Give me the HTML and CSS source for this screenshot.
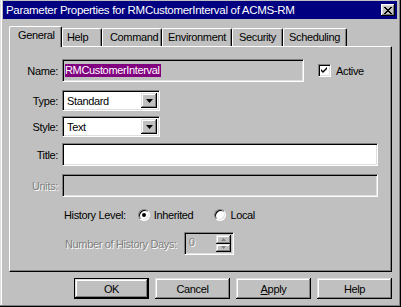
FILE: index.html
```html
<!DOCTYPE html>
<html>
<head>
<meta charset="utf-8">
<link rel="stylesheet" href="styles.css">
</head>
<body>
<div class="window">
  <div class="titlebar">
    <span class="title">Parameter Properties for RMCustomerInterval of ACMS-RM</span>
    <span class="close"><svg width="8" height="7" viewBox="0 0 8 7"><path d="M0 0h2v1h1v1h2v-1h1v-1h2v1h-1v1h-1v1h-1v1h1v1h1v1h1v1h-2v-1h-1v-1h-2v1h-1v1h-2v-1h1v-1h1v-1h1v-1h-1v-1h-1v-1h-1z" fill="#000"/></svg></span>
  </div>
  <div class="main">
    <div class="tabs">
      <div class="tab selected t-general">General</div>
      <div class="tab t-help">Help</div>
      <div class="tab t-command">Command</div>
      <div class="tab t-env">Environment</div>
      <div class="tab t-sec">Security</div>
      <div class="tab t-sched">Scheduling</div>
    </div>
    <div class="panel">
      <div class="row r-name">
        <span class="lbl">Name:</span>
        <div class="sunken field name-field disabled-bg"><span class="seltext">RMCustomerInterval</span></div>
        <div class="check">
          <span class="sunken box"><svg width="7" height="7" viewBox="0 0 7 7"><path d="M6 0v2l-1 1-1 1-1 1-1 1-1-1-1-1v-2l1 1 1 1 1-1 1-1 1-1z" fill="#000"/></svg></span>
          <span>Active</span>
        </div>
      </div>
      <div class="row r-type">
        <span class="lbl">Type:</span>
        <div class="sunken select"><span class="seltxt">Standard</span><span class="raised drop"><svg width="7" height="4" viewBox="0 0 7 4"><path d="M0 0h7l-3.5 4z" fill="#000"/></svg></span></div>
      </div>
      <div class="row r-style">
        <span class="lbl">Style:</span>
        <div class="sunken select"><span class="seltxt">Text</span><span class="raised drop"><svg width="7" height="4" viewBox="0 0 7 4"><path d="M0 0h7l-3.5 4z" fill="#000"/></svg></span></div>
      </div>
      <div class="row r-title">
        <span class="lbl">Title:</span>
        <div class="sunken field wide"></div>
      </div>
      <div class="row r-units">
        <span class="lbl dis">Units:</span>
        <div class="sunken field wide disabled-bg"></div>
      </div>
      <div class="row r-hist">
        <span class="hist-lbl">History Level:</span>
        <span class="radio-item r-inh"><span class="radio"><span class="dot"></span></span><span>Inherited</span></span>
        <span class="radio-item"><span class="radio"></span><span>Local</span></span>
      </div>
      <div class="row r-days">
        <span class="days-lbl dis">Number of History Days:</span>
        <div class="sunken spin disabled-bg">
          <span class="spin-val dis">0</span>
          <span class="spin-btns">
            <span class="raised sbtn"><svg width="5" height="3" viewBox="0 0 5 3"><path d="M0 3h5l-2.5-3z" fill="#808080"/></svg></span>
            <span class="raised sbtn"><svg width="5" height="3" viewBox="0 0 5 3"><path d="M0 0h5l-2.5 3z" fill="#808080"/></svg></span>
          </span>
        </div>
      </div>
    </div>
    <div class="buttons">
      <div class="btn default"><span class="raised inner">OK</span></div>
      <div class="btn raised">Cancel</div>
      <div class="btn raised"><span><u>A</u>pply</span></div>
      <div class="btn raised">Help</div>
    </div>
  </div>
</div>
</body>
</html>
```

FILE: styles.css
```css
* { box-sizing: border-box; }
html, body { margin: 0; padding: 0; }
body {
  width: 401px;
  height: 307px;
  background: #c0c0c0;
  font-family: "Liberation Sans", Arial, sans-serif;
  font-size: 11px;
  letter-spacing: -0.35px;
  color: #000;
  overflow: hidden;
}
.window {
  width: 401px;
  height: 307px;
  padding: 1px 4px 0 3px;
  background: #c0c0c0;
  box-shadow: inset -1px -1px #000, inset -2px -2px #808080, inset 1px 0 #dfdfdf, inset 2px 0 #fff;
}
.titlebar {
  height: 18px;
  background: #000080;
  color: #fff;
  display: flex;
  align-items: center;
  justify-content: space-between;
  padding: 0 2px 0 3px;
}
.title { font-size: 11.5px; letter-spacing: -0.3px; }
.close {
  width: 14px;
  height: 12px;
  background: #c0c0c0;
  display: flex;
  align-items: center;
  justify-content: center;
  box-shadow: inset -1px -1px #000, inset 1px 1px #fff, inset -2px -2px #808080, inset 2px 2px #dfdfdf;
}
.main {
  padding: 7px 5px 0 6px;
}
.tabs {
  display: flex;
  align-items: flex-end;
  height: 20px;
}
.tab {
  height: 18px;
  background: #c0c0c0;
  border-top: 1px solid #fff;
  border-left: 1px solid #fff;
  border-right: 1px solid #000;
  border-radius: 2px 2px 0 0;
  box-shadow: inset -1px 0 #808080;
  padding-top: 2px;
  white-space: nowrap;
}
.tab.selected {
  height: 21px;
  margin-bottom: -1px;
  position: relative;
  z-index: 1;
  padding-top: 2px;
}
.t-general { width: 53px; padding-left: 8px; }
.t-help { width: 40px; padding-left: 4px; }
.t-command { width: 60px; padding-left: 7px; }
.t-env { width: 70px; padding-left: 5px; }
.t-sec { width: 51px; padding-left: 6px; }
.t-sched { width: 64px; padding-left: 5px; }

.panel {
  width: 383px;
  height: 226px;
  border: 1px solid;
  border-color: #fff #000 #000 #fff;
  box-shadow: inset -1px -1px #808080;
  padding: 12px 0 0 0;
  display: flex;
  flex-direction: column;
}
.row {
  display: flex;
  align-items: center;
}
.lbl {
  width: 48px;
  text-align: right;
  margin-right: 4px;
}
.dis {
  color: #808080;
  text-shadow: 1px 1px #fff;
}
.sunken {
  border: 1px solid;
  border-color: #808080 #fff #fff #808080;
  box-shadow: inset 1px 1px #000, inset -1px -1px #dfdfdf;
  background: #fff;
}
.raised {
  background: #c0c0c0;
  box-shadow: inset -1px -1px #000, inset 1px 1px #dfdfdf, inset -2px -2px #808080, inset 2px 2px #fff;
}
.disabled-bg { background: #c0c0c0; }
.field {
  height: 23px;
  display: flex;
  align-items: center;
  padding: 0 2px;
}
.name-field { width: 242px; }
.wide { width: 316px; }
.seltext {
  background: #800080;
  color: #fff;
  line-height: 13px;
  padding: 0 1px 0 0;
}
.check {
  display: flex;
  align-items: center;
  margin-left: 14px;
}
.box {
  width: 13px;
  height: 13px;
  display: flex;
  align-items: center;
  justify-content: center;
  margin-right: 5px;
}
.r-name { margin-bottom: 8px; }
.r-type { margin-bottom: 5px; }
.r-style { margin-bottom: 6px; }
.r-title { margin-bottom: 8px; }
.r-units { margin-bottom: 10px; }
.r-hist { margin-bottom: 9px; height: 16px; }
.select {
  width: 98px;
  height: 21px;
  display: flex;
  align-items: stretch;
  justify-content: space-between;
  padding: 2px;
}
.seltxt { padding-left: 2px; line-height: 17px; }
.drop {
  width: 16px;
  display: flex;
  align-items: center;
  justify-content: center;
}
.hist-lbl { margin-left: 54px; margin-right: 12px; }
.radio-item {
  display: flex;
  align-items: center;
}
.r-inh { margin-right: 21px; }
.radio {
  width: 12px;
  height: 12px;
  border-radius: 50%;
  background: #fff;
  border: 1px solid;
  border-color: #808080 #fff #fff #808080;
  box-shadow: inset 1px 1px #000, inset -1px -1px #dfdfdf;
  display: flex;
  align-items: center;
  justify-content: center;
  margin-right: 4px;
}
.dot {
  width: 4px;
  height: 4px;
  border-radius: 50%;
  background: #000;
}
.days-lbl { margin-left: 55px; margin-right: 7px; }
.spin {
  width: 50px;
  height: 23px;
  display: flex;
  justify-content: space-between;
  padding: 2px;
}
.spin-val { padding-left: 2px; line-height: 14px; }
.spin-btns {
  width: 15px;
  display: flex;
  flex-direction: column;
}
.sbtn {
  flex: 1;
  display: flex;
  align-items: center;
  justify-content: center;
}
.buttons {
  display: flex;
  justify-content: flex-end;
  gap: 6px;
  margin-top: 6px;
  width: 383px;
}
.btn {
  width: 75px;
  height: 21px;
  display: flex;
  align-items: center;
  justify-content: center;
}
.btn.default {
  border: 1px solid #000;
}
.btn.default .inner {
  width: 100%;
  height: 100%;
  display: flex;
  align-items: center;
  justify-content: center;
}
```
